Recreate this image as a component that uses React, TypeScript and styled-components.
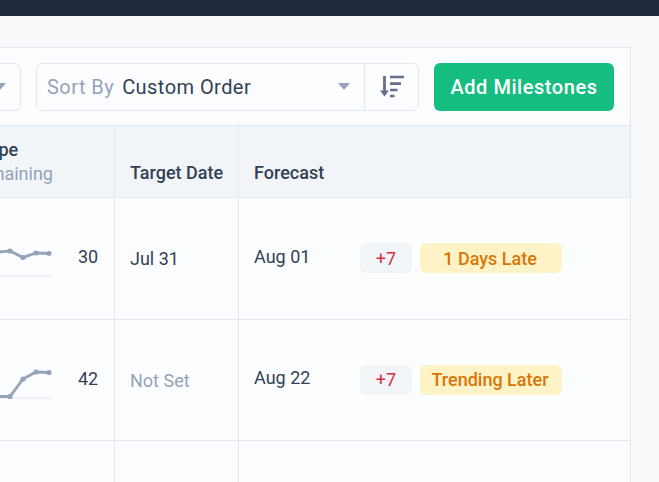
import styled, { createGlobalStyle } from 'styled-components';

const GlobalStyle = createGlobalStyle`
  html, body {
    margin: 0;
    height: 100%;
    background: #f7f9fb;
    font-family: Roboto, "Liberation Sans", sans-serif;
    overflow: hidden;
  }
`;

const Page = styled.div`
  width: 659px;
  height: 482px;
  overflow: hidden;
  display: flex;
  flex-direction: column;
`;

const TopBar = styled.div`
  flex: none;
  height: 16px;
  background: #1e293b;
`;

const Content = styled.div`
  flex: 1;
  min-height: 0;
  display: flex;
  justify-content: flex-end;
  padding: 31px 28px 0 0;
`;

const Card = styled.div`
  flex: none;
  width: 800px;
  box-sizing: border-box;
  background: #fcfdff;
  border: 1px solid #e2e8f0;
  border-bottom: none;
`;

const Toolbar = styled.div`
  display: flex;
  justify-content: flex-end;
  align-items: center;
  gap: 15px;
  height: 78px;
  box-sizing: border-box;
  padding: 0 16px;
  border-bottom: 1px solid #e2e8f0;
`;

const Control = styled.div`
  display: flex;
  height: 48px;
  box-sizing: border-box;
  border: 1px solid #e2e8f0;
  border-radius: 6px;
`;

const ControlMain = styled.div<{ $width: number }>`
  width: ${({ $width }) => $width}px;
  box-sizing: border-box;
  display: flex;
  align-items: center;
  padding: 0 14px 0 10px;
  font-size: 20px;
  letter-spacing: 0.45px;
  color: #334155;
`;

const ControlLabel = styled.span`
  color: #94a3b8;
  margin-right: 8px;
`;

const Caret = styled.span`
  margin-left: auto;
  width: 0;
  height: 0;
  border-left: 6.5px solid transparent;
  border-right: 6.5px solid transparent;
  border-top: 7px solid #94a3b8;
`;

const SortButton = styled.div`
  width: 53px;
  border-left: 1px solid #e2e8f0;
  display: flex;
  align-items: center;
  justify-content: center;
`;

const AddButton = styled.button`
  width: 180px;
  height: 48px;
  border: none;
  border-radius: 6px;
  background: #15bd80;
  color: #fff;
  font: 500 20px Roboto, "Liberation Sans", sans-serif;
  letter-spacing: 0.55px;
  padding: 0;
`;

const Row = styled.div<{ $header?: boolean }>`
  display: grid;
  grid-template-columns: 283px 124px 1fr;
  height: ${({ $header }) => ($header ? '72px' : '121.5px')};
  box-sizing: border-box;
  background: ${({ $header }) => ($header ? '#f1f5f8' : 'transparent')};
  border-bottom: 1px solid #e2e8f0;
`;

const Cell = styled.div`
  display: flex;
  align-items: center;
  padding-left: 15px;
  border-right: 1px solid #e2e8f0;
  font-size: 18px;
  color: #334155;
  &:last-child {
    border-right: none;
  }
`;

const HeadCell = styled(Cell)`
  font-weight: 500;
  font-size: 18px;
  padding-top: 22px;
`;

const ScopeHead = styled.div`
  margin-left: auto;
  padding-right: 60px;
  width: 86px;
  line-height: 24px;
  margin-top: -22px;
`;

const ScopeSub = styled.div`
  color: #94a3b8;
  font-weight: 400;
`;

const Spark = styled.svg`
  flex: none;
  display: block;
`;

const ScopeCell = styled(Cell)`
  justify-content: flex-end;
  padding: 0 16px 0 0;
`;

const ScopeValue = styled.span<{ $lift: number }>`
  width: 20px;
  margin-left: 26px;
  margin-bottom: ${({ $lift }) => $lift}px;
`;

const DateText = styled.span<{ $muted?: boolean }>`
  color: ${({ $muted }) => ($muted ? '#94a3b8' : '#334155')};
  margin-top: 1px;
`;

const ForecastDate = styled.span`
  width: 106px;
  margin-bottom: 4px;
`;

const Delta = styled.span`
  width: 52px;
  height: 30px;
  border-radius: 6px;
  background: #f1f5f8;
  color: #dc2f3c;
  display: flex;
  align-items: center;
  justify-content: center;
  margin-right: 8px;
`;

const Status = styled.span`
  width: 142px;
  height: 30px;
  padding-right: 2px;
  box-sizing: border-box;
  border-radius: 6px;
  background: #fef3c7;
  color: #d97706;
  font-weight: 500;
  display: flex;
  align-items: center;
  justify-content: center;
`;

const SortIcon = () => (
  <svg width="26" height="24" viewBox="0 0 26 24" fill="none">
    <path d="M5.5 1v16" stroke="#64708a" strokeWidth="2.8" />
    <path d="M1 15.5h9l-4.5 6z" fill="#64708a" />
    <path d="M11 2h14M11 8.6h11M11 15h7.5M11 21h4.5" stroke="#64708a" strokeWidth="2.6" />
  </svg>
);

type SparkPoint = [number, number];

const Sparkline = ({ points, base }: { points: SparkPoint[]; base: number }) => (
  <Spark width="100" height="60" viewBox="0 0 100 60">
    <path d={`M0 ${base}H100`} stroke="#e2e8f0" strokeWidth="1" />
    <polyline points={points.map((p) => p.join(',')).join(' ')} fill="none" stroke="#94a3b8" strokeWidth="2.8" />
    {points.map(([x, y]) => (
      <circle key={x} cx={x} cy={y} r="2.6" fill="#94a3b8" />
    ))}
  </Spark>
);

const rows = [
  {
    value: 30,
    lift: 3,
    base: 48,
    points: [[20, 26], [33, 25], [46, 24], [58, 23], [71, 29.5], [84, 25], [97, 25.5]] as SparkPoint[],
    target: 'Jul 31',
    muted: false,
    forecast: 'Aug 01',
    status: '1 Days Late',
  },
  {
    value: 42,
    lift: 3,
    base: 48,
    points: [[20, 46.5], [33, 46.5], [46, 46.5], [58, 46.5], [71, 29], [84, 22], [97, 22.5]] as SparkPoint[],
    target: 'Not Set',
    muted: true,
    forecast: 'Aug 22',
    status: 'Trending Later',
  },
];

export default function App() {
  return (
    <Page>
      <GlobalStyle />
      <TopBar />
      <Content>
        <Card>
          <Toolbar>
            <Control>
              <ControlMain $width={100}>
                <Caret />
              </ControlMain>
            </Control>
            <Control>
              <ControlMain $width={327}>
                <ControlLabel>Sort By</ControlLabel>
                Custom Order
                <Caret />
              </ControlMain>
              <SortButton>
                <SortIcon />
              </SortButton>
            </Control>
            <AddButton>Add Milestones</AddButton>
          </Toolbar>
          <Row $header>
            <HeadCell>
              <ScopeHead>
                Scope
                <ScopeSub>Remaining</ScopeSub>
              </ScopeHead>
            </HeadCell>
            <HeadCell>Target Date</HeadCell>
            <HeadCell>Forecast</HeadCell>
          </Row>
          {rows.map((row) => (
            <Row key={row.value}>
              <ScopeCell>
                <Sparkline points={row.points} base={row.base} />
                <ScopeValue $lift={row.lift}>{row.value}</ScopeValue>
              </ScopeCell>
              <Cell>
                <DateText $muted={row.muted}>{row.target}</DateText>
              </Cell>
              <Cell>
                <ForecastDate>{row.forecast}</ForecastDate>
                <Delta>+7</Delta>
                <Status>{row.status}</Status>
              </Cell>
            </Row>
          ))}
          <Row>
            <Cell />
            <Cell />
            <Cell />
          </Row>
        </Card>
      </Content>
    </Page>
  );
}
